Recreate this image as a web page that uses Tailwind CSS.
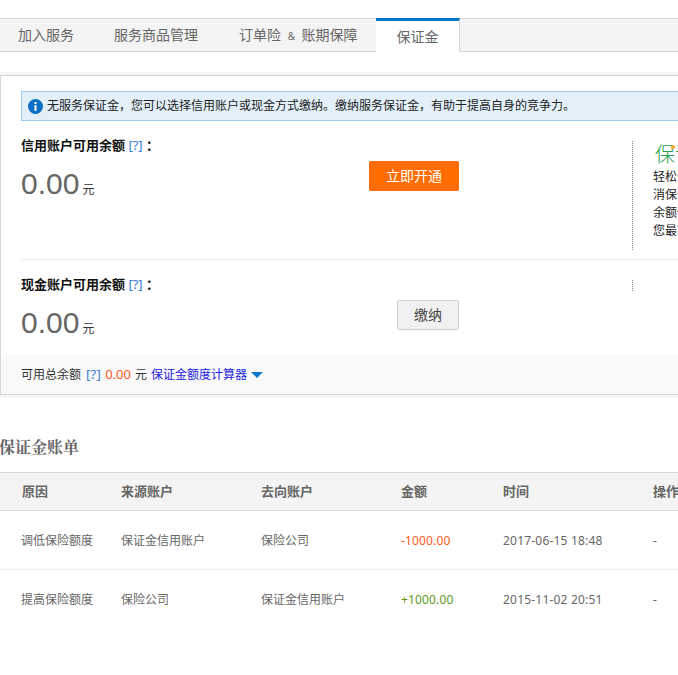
<!DOCTYPE html>
<html lang="zh-CN">
<head>
    <meta charset="UTF-8">
    <meta name="viewport" content="width=device-width, initial-scale=1.0">
    <title>保证金</title>
    <script src="https://cdn.jsdelivr.net/npm/@tailwindcss/browser@4"></script>
</head>
<body class="bg-white overflow-hidden font-['Noto_Sans','Noto_Sans_CJK_SC',sans-serif] text-xs text-[#333]">
    <div class="w-[900px] h-[675px] overflow-hidden pt-[18px]">
        <!-- Tabs -->
        <div class="flex h-[34px] bg-[#f4f4f4] border-y border-[#d8d8d8] text-sm text-[#666]">
            <a class="w-[94px] pl-[18px] leading-[32px]">加入服务</a>
            <a class="w-[125px] pl-[20px] leading-[32px]">服务商品管理</a>
            <a class="w-[138px] pl-[20px] leading-[32px] whitespace-nowrap">订单险 <span class="text-[10px] mx-[3px]">&amp;</span> 账期保障</a>
            <a class="w-[84px] ml-[19px] -mt-px h-[34px] bg-white border-t-[3px] border-t-[#0077c8] border-r border-r-[#d8d8d8] text-center leading-[32px]">保证金</a>
        </div>

        <!-- Balance panel -->
        <div class="mt-5 border-t-[3px] border-[#f4f4f4]">
            <div class="border-t border-b border-l border-[#d8d8d8] shadow-[0_2px_0_#f4f4f4]">
                <div class="pt-[15px] pl-[20px]">
                    <div class="flex items-center h-[30px] border border-[#9ccdee] bg-[#e3f0fa] pl-[6px] text-[#222]">
                        <svg class="w-[15px] h-[15px] mr-[4px] shrink-0" viewBox="0 0 16 16"><circle cx="8" cy="8" r="8" fill="#0a70c4"/><rect x="6.9" y="6.6" width="2.2" height="6" fill="#fff"/><rect x="6.9" y="3.2" width="2.2" height="2.2" fill="#fff"/></svg>
                        <span>无服务保证金，您可以选择信用账户或现金方式缴纳。缴纳服务保证金，有助于提高自身的竞争力。</span>
                    </div>
                </div>

                <!-- Credit account -->
                <div class="flex h-[139px] ml-[20px] border-b border-[#eeeeee]">
                    <div class="w-[348px] pt-[15px]">
                        <p class="leading-[18px] text-[13px] font-bold text-[#111]">信用账户可用余额 <span class="font-normal text-[#3a7bd5]">[?]</span> ：</p>
                        <p class="mt-[10px] flex items-baseline leading-[40px]"><span class="text-[30px] font-['Liberation_Sans'] text-[#666]">0.00</span><span class="ml-[3px] text-[#333]">元</span></p>
                    </div>
                    <div class="w-[90px] pt-[40px]">
                        <button class="w-[90px] h-[30px] rounded-[2px] bg-[#ff6c00] text-white text-sm">立即开通</button>
                    </div>
                    <div class="ml-[173px] mt-[20px] h-[109px] border-l border-dotted border-[#888] pl-[20px]">
                        <p class="relative pl-[2px] text-xl leading-[27px] text-[#22a04f] font-light">保证金<span class="absolute left-[18px] top-[4px] size-[4px] rounded-full bg-[#f5a623]"></span></p>
                        <p class="leading-[18px] text-[#222]">轻松开通</p>
                        <p class="leading-[18px] text-[#222]">消保保证</p>
                        <p class="leading-[18px] text-[#222]">余额保障</p>
                        <p class="leading-[18px] text-[#222]">您最高可</p>
                    </div>
                </div>

                <!-- Cash account -->
                <div class="flex h-[95px] ml-[20px]">
                    <div class="w-[376px] pt-[15px]">
                        <p class="leading-[18px] text-[13px] font-bold text-[#111]">现金账户可用余额 <span class="font-normal text-[#3a7bd5]">[?]</span> ：</p>
                        <p class="mt-[10px] flex items-baseline leading-[40px]"><span class="text-[30px] font-['Liberation_Sans'] text-[#666]">0.00</span><span class="ml-[3px] text-[#333]">元</span></p>
                    </div>
                    <div class="w-[62px] pt-[40px]">
                        <button class="w-[62px] h-[30px] rounded-[2px] bg-[#f1f1f1] border border-[#ccc] text-sm text-[#444]">缴纳</button>
                    </div>
                    <div class="ml-[173px] mt-[20px] h-[11px] border-l border-dotted border-[#888]"></div>
                </div>

                <!-- Total -->
                <div class="flex items-center h-[39px] bg-[#f9f9f9] pl-[20px] gap-[4px]">
                    <span>可用总余额</span>
                    <span class="ml-px text-[13px] tracking-[0.3px] text-[#3a7bd5]">[?]</span>
                    <span class="text-[13px] text-[#ff5a22]">0.00</span>
                    <span>元</span>
                    <a class="text-[#1a1ae0]">保证金额度计算器</a>
                    <svg class="w-3 h-[6px]" viewBox="0 0 12 6"><path d="M0 0h12L6 6z" fill="#0a78c8"/></svg>
                </div>
            </div>
        </div>

        <!-- Bill -->
        <h2 class="mt-[41px] -ml-px text-base leading-[22px] font-bold font-['Noto_Serif_CJK_SC','Noto_Sans_CJK_SC',serif] text-[#666]">保证金账单</h2>
        <div class="mt-[14px]">
            <div class="grid grid-cols-[121px_140px_140px_102px_150px_1fr] h-[39px] items-center bg-[#f4f4f4] border-y border-[#d8d8d8] text-[13px] font-bold text-[#666]">
                <span class="pl-[22px]">原因</span><span>来源账户</span><span>去向账户</span><span>金额</span><span>时间</span><span>操作</span>
            </div>
            <div class="grid grid-cols-[121px_140px_140px_102px_150px_1fr] h-[59px] pt-px items-center border-b border-[#eeeeee] text-[#666]">
                <span class="pl-[21px]">调低保险额度</span><span>保证金信用账户</span><span>保险公司</span><span class="text-[#ff5a22] tracking-[0.15px]">-1000.00</span><span class="tracking-[0.2px]">2017-06-15 18:48</span><span>-</span>
            </div>
            <div class="grid grid-cols-[121px_140px_140px_102px_150px_1fr] h-[59px] items-center text-[#666]">
                <span class="pl-[21px]">提高保险额度</span><span>保险公司</span><span>保证金信用账户</span><span class="text-[#5c9a1a] tracking-[0.15px]">+1000.00</span><span class="tracking-[0.2px]">2015-11-02 20:51</span><span>-</span>
            </div>
        </div>
    </div>
</body>
</html>
